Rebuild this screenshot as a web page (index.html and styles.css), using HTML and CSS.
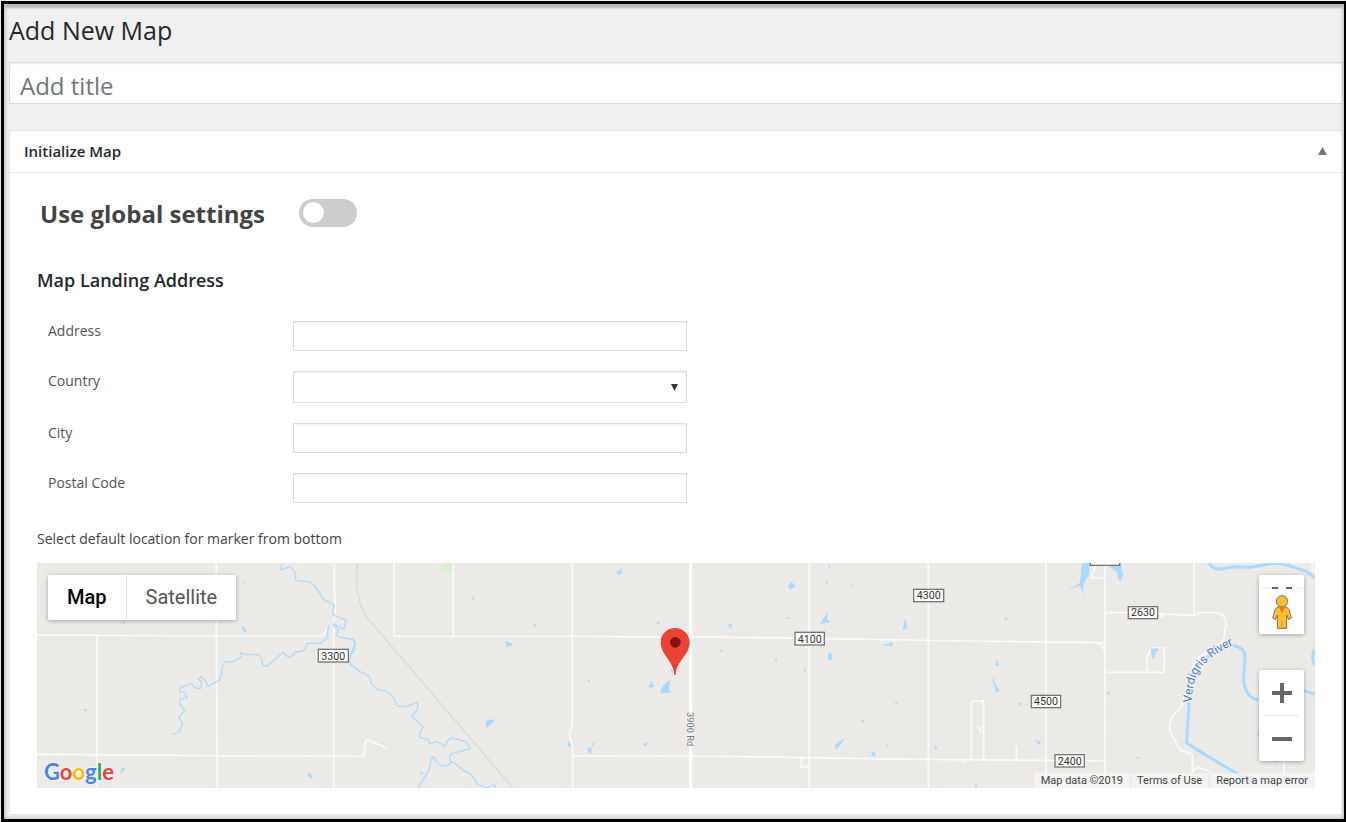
FILE: index.html
```html
<!DOCTYPE html>
<html lang="en">
<head>
<meta charset="utf-8">
<meta name="viewport" content="width=device-width, initial-scale=1">
<title>Add New Map</title>
<link rel="stylesheet" href="styles.css">
</head>
<body>
<main class="frame">
  <h1 class="page-title">Add New Map</h1>
  <input class="title-input" type="text" placeholder="Add title" aria-label="Add title">

  <section class="card">
    <header class="card-header">
      <h2 class="card-title">Initialize Map</h2>
      <button class="card-toggle" type="button" aria-label="Toggle panel">
        <svg width="9" height="8" viewBox="0 0 9 8"><path d="M4.500 0 9 8H0z" fill="#72777c"/></svg>
      </button>
    </header>

    <div class="card-body">
      <div class="global-row">
        <label class="global-label" for="global">Use global settings</label>
        <input class="switch" id="global" type="checkbox">
      </div>

      <h3 class="section-title">Map Landing Address</h3>
      <div class="fields">
        <label for="address">Address</label>
        <input class="field" id="address" type="text">
        <label for="country">Country</label>
        <div class="select-wrap">
          <select class="field field-select" id="country"><option></option></select>
          <svg class="select-arrow" width="7" height="7" viewBox="0 0 7 7"><path d="M0 0h7L3.500 7z" fill="#32373c"/></svg>
        </div>
        <label for="city">City</label>
        <input class="field" id="city" type="text">
        <label for="postal">Postal Code</label>
        <input class="field" id="postal" type="text">
      </div>

      <p class="hint">Select default location for marker from bottom</p>

      <div class="map">
        <svg class="map-canvas" viewBox="0 0 3834 675" preserveAspectRatio="xMidYMid slice" role="img" aria-label="Map">
          <rect width="3834" height="675" fill="#ebeae7"/>
          <!-- park and railway -->
          <path d="M1214 0h33v20h-34z" fill="#d5f0cb"/>
          <path d="M960 0V75Q965 120 985 158L1428 675" fill="none" stroke="#d8d9dc" stroke-width="4"/>

          <!-- local roads -->
          <g class="road">
            <path d="M0 216 540 219H856L884 182 892 170 896 130 892 90V0M180 219V675M538 0V219L541 675M890 182V675M0 574 540 578 980 580 986 535Q990 527 1000 534L1050 555"/>
            <path d="M1071 0V220H1600L2130 223 2620 231 2769 234 3204 239M1249 0V220M1606 0V485L1597 515 1607 552V675M1606 578 2130 581 2620 589 2769 590 3204 594M2317 0V675M2674 0V675M2293 585V613L2317 610M3027 0V675M2780 594V600"/>
            <path d="M3204 0V675M3204 149H3290M3362 152 3471 158 3490 149H3545Q3568 160 3567 185L3560 230Q3550 250 3510 268 3475 285 3462 325L3434 430 3405 462Q3388 500 3412 530L3430 562 3466 573V640L3462 675M3471 0V158M3330 328V280L3345 255H3382V328H3204M3204 45H3166Q3162 30 3178 8M3174 239Q3200 242 3204 270M2803 590V420L2807 414H2840V590M2838 494a7 7 0 1 0 0 12M2938 550V592M3465 628Q3480 605 3510 622L3545 642M3740 590V675M3826 0V20L3834 26"/>
          </g>
          <path d="M1961 0V675" fill="none" stroke="#fff" stroke-width="9"/>
          <circle cx="3376" cy="159" r="5" fill="#fff"/>

          <!-- creeks -->
          <g class="creek" transform="translate(-21 -21)">
            <path d="M756 22 752 42 780 32 797 52V73L836 77Q850 84 858 95L880 130 912 147 908 175 948 193 942 220 907 203 926 223 918 234 925 243 967 250Q975 252 973 262L975 280Q950 310 962 324L990 347"/>
            <path d="M900 205 893 223V243L872 262H833L820 285 797 288 784 303 773 302 760 289 710 331Q695 330 695 310L688 295 648 296 633 290V304L603 318 585 317Q575 330 576 350L568 373 533 392 528 376 514 362 505 370 514 376V396L498 397 484 382 452 394 449 407 462 408 472 424 451 429 449 445 464 463 446 485 458 503 446 528 427 537"/>
          </g>
          <g class="creek" transform="translate(939 -21)">
            <path d="M0 250Q18 248 14 266L0 300M0 324 25 344 55 360Q65 368 62 382L90 404H108L132 425Q136 448 145 451H172L203 438V458L186 482 219 514Q208 530 209 544L234 550 239 563 262 557 285 570Q295 545 310 547L350 558 361 578 305 593Q295 600 302 618L312 620 340 643 364 656 384 686 410 695 433 685 437 697M203 697 235 646 247 603Q256 600 256 613 265 625 276 629H292L306 618"/>
          </g>
          <g class="river" transform="translate(3309 -21)">
            <path d="M205 20Q220 42 245 39L280 32 330 34Q365 28 390 24 420 18 455 32L500 47 526 66M154 350Q185 305 230 290 265 270 275 268 315 275 315 300L311 370Q315 425 355 432M147 440 140 560Q200 600 290 652L340 680M524 280Q512 305 524 328M490 404 526 414M357 523V540M400 613H416"/>
          </g>

          <!-- ponds -->
          <g class="pond">
            <path transform="translate(-21 -21)" d="M639 75h5l-3 12zM633 207l14 12 3 12-8-2zM273 198l10-2 1 9zM248 190h6v4zM161 465l5-8 6 9zM270 655l5-20 12 1zM831 655l10-4 6 11-4 5z"/>
            <path transform="translate(939 -21)" d="M795 46h11l8-9 2 15-7 6zM366 130l3-10 5 11zM551 200l6 5v8h-5zM466 256l20 6 3 6-20 5zM405 498l18-9 11 5-23 22zM918 206l6-12 6 10zM712 378l4-9 5 9zM895 393l8-19 11 18-12 3zM930 412q5-28 31-41l-4 27 6 12zM962 345l6-8 2 15zM652 560l5-4 6 13-10 1zM711 580l4-5 9-1 1 18-8-2zM725 565l6-7v14zM878 564l12-5-1 12zM207 652l12-5-3 10z"/>
            <path transform="translate(1809 -21)" d="M443 92l12-15 11 13-14 12zM565 27h8l-5 10zM557 75l9 2-6 8zM627 85l13 2v5zM264 205h12l-4 14zM443 183l11 3-10 3zM540 204l23-35-2 20 11 9zM788 220l8-34 5 32zM237 285l11-6-1 9zM402 310l9-6-1 10zM565 289l12 3-1 21-12-1zM490 340h9l-5 9zM724 267l34-8v12zM760 439l15-1-3 6zM662 491l14-1-7 10zM584 568l31-23-25 36zM695 584l13 7-4 10-9-2zM738 570l8-9-3 13zM884 567l10 7-9 5zM95 345l25-15-12 23-14-4z"/>
            <path transform="translate(2769 -21)" d="M366 20h24l-3 37-14 22-4 12 3 25-9-18-3-9-35 13 35-22zM448 32l34-13 5 28 4 2-7 24-8-2-5-23zM135 186l9-1-8 12zM105 330l7-20 5 18zM102 353l1 28 16 22-10 9-11-36zM174 442l12-1-5 10zM227 553l17 5-9 8zM441 408l12 3-11 6zM572 278l23-2-17 35zM526 601l17 4-10 3zM46 682h4v14h-5z"/>
          </g>

          <!-- labels -->
          <g class="shield">
            <rect x="844" y="259" width="90" height="38"/><text x="889" y="290">3300</text>
            <rect x="2274" y="208" width="88" height="38"/><text x="2318" y="239">4100</text>
            <rect x="2630" y="79" width="90" height="37"/><text x="2675" y="109">4300</text>
            <rect x="2983" y="397" width="88" height="37"/><text x="3027" y="427">4500</text>
            <rect x="3054" y="575" width="88" height="37"/><text x="3098" y="605">2400</text>
            <rect x="3274" y="131" width="88" height="36"/><text x="3318" y="160">2630</text>
            <rect x="3160" y="-30" width="88" height="37"/>
          </g>
          <text class="road-name" transform="translate(1950 447) rotate(90)">3900 Rd</text>
          <path id="river-path" d="M3464 419C3468 330 3490 290 3600 240" fill="none"/>
          <text class="river-name"><textPath href="#river-path">Verdigris River</textPath></text>

          <!-- marker -->
          <path d="M1914 195c-25 0-43 19-43 43 0 40 38 54 41 98h4c3-44 42-58 42-98 0-24-19-43-44-43z" fill="#ea4335" stroke="#fff" stroke-width="4" paint-order="stroke"/>
          <circle cx="1915" cy="238" r="16" fill="#811411"/>
        </svg>

        <div class="map-types">
          <button class="type-btn type-active" type="button">Map</button>
          <button class="type-btn" type="button">Satellite</button>
        </div>

        <div class="side-top">
          <button class="full-btn" type="button" aria-label="Toggle fullscreen">
            <svg width="20" height="2" viewBox="0 0 20 2"><path d="M0 0h6v2H0zM14 0h6v2h-6z" fill="#666"/></svg>
          </button>
          <button class="pegman" type="button" aria-label="Street View">
            <svg width="20" height="34" viewBox="0 0 60 102">
              <g fill="#fbbf2d" stroke="#77746d" stroke-width="3" stroke-linejoin="round">
                <path d="M16 36h28l7 8 7 25-8 5-6-14v40H16V60l-6 14-8-5 7-25z"/>
                <circle cx="30" cy="19" r="17"/>
              </g>
              <path d="M30 76v22" stroke="#b98f35" stroke-width="2"/>
              <path d="M20 36h21L30 54z" fill="#e07b28"/>
            </svg>
          </button>
        </div>

        <div class="zoom">
          <button class="zoom-btn" type="button" aria-label="Zoom in">
            <svg width="20" height="20" viewBox="0 0 20 20"><path d="M8 0h4v8h8v4h-8v8H8v-8H0V8h8z" fill="#666"/></svg>
          </button>
          <button class="zoom-btn" type="button" aria-label="Zoom out">
            <svg width="20" height="20" viewBox="0 0 20 20"><path d="M0 8h20v4H0z" fill="#666"/></svg>
          </button>
        </div>

        <a class="google" href="#" aria-label="Google"><span class="g-blue">G</span><span class="g-red">o</span><span class="g-yellow">o</span><span class="g-blue">g</span><span class="g-green">l</span><span class="g-red">e</span></a>

        <div class="credits">
          <span>Map data ©2019</span>
          <a href="#">Terms of Use</a>
          <a href="#">Report a map error</a>
        </div>
      </div>
    </div>
  </section>
</main>
</body>
</html>
```
FILE: styles.css
```css
* { box-sizing: border-box; }

body {
  margin: 0;
  padding: 1px 0 0 1px;
  min-height: 100vh;
  display: flex;
  background: #e4efe6;
  color: #444;
  font-family: "Open Sans", "Noto Sans", sans-serif;
  font-size: 14px;
}

h1, h2, h3, p { margin: 0; }
button { font: inherit; border: 0; padding: 0; background: none; cursor: pointer; }
svg { display: block; }

.frame {
  position: relative;
  flex: 1;
  min-width: 0;
  display: flex;
  flex-direction: column;
  padding: 9px 1px 4px 5px;
  border: 3px solid #000;
  border-right-width: 2px;
  background: #f0f0f0;
}
.frame::after {
  content: "";
  position: absolute;
  inset: 0;
  pointer-events: none;
  box-shadow: inset 0 4px 2px #bbb, inset 0 0 5px rgba(0, 0, 0, .3);
}

.page-title {
  color: #23282d;
  font-size: 25px;
  font-weight: 400;
  line-height: 34px;
}

.title-input {
  width: 100%;
  height: 42px;
  margin: 15px 0 26px;
  padding: 4px 10px 0;
  border: 1px solid #ddd;
  background: #fff;
  box-shadow: inset 0 1px 2px rgba(0, 0, 0, .07);
  color: #32373c;
  font-family: inherit;
  font-size: 24px;
}
.title-input::placeholder { color: #72777c; }

.card {
  flex: 1;
  border: 1px solid #e5e5e5;
  background: #fff;
}
.card-header {
  display: flex;
  align-items: center;
  justify-content: space-between;
  height: 42px;
  padding: 0 15px 2px 14px;
  border-bottom: 1px solid #eee;
}
.card-title { color: #23282d; font-size: 15px; font-weight: 600; }
.card-body { padding: 19px 27px 26px; }

.global-row {
  display: flex;
  align-items: center;
  gap: 34px;
  padding: 0 3px;
  height: 42px;
}
.global-label { font-size: 24px; font-weight: 700; }
.switch {
  appearance: none;
  width: 58px;
  height: 28px;
  margin: 0;
  padding: 3px 4px;
  border-radius: 14px;
  background: #ccc;
}
.switch::before {
  content: "";
  display: block;
  width: 21px;
  height: 21px;
  border-radius: 50%;
  background: #fff;
}
.switch:checked { background: #2196f3; }
.switch:checked::before { margin-left: auto; }

.section-title {
  margin-top: 33px;
  color: #23282d;
  font-size: 18px;
  font-weight: 600;
  line-height: 26px;
}

.fields {
  display: grid;
  grid-template-columns: 245px minmax(0, 394px);
  row-gap: 20px;
  margin-top: 28px;
  padding-left: 11px;
}
.fields label { line-height: 20px; color: #555; }
.field {
  display: block;
  width: 100%;
  height: 30px;
  border: 1px solid #ddd;
  background: #fff;
  box-shadow: inset 0 1px 2px rgba(0, 0, 0, .07);
  font-family: inherit;
  font-size: 14px;
}
.field-select { height: 32px; appearance: none; border-radius: 0; }
.select-wrap { position: relative; }
.select-arrow { position: absolute; right: 9px; top: 13px; pointer-events: none; }

.hint { margin: 25px 0 14px; line-height: 21px; }

.map {
  position: relative;
  height: 225px;
  overflow: hidden;
  background: #ebeae7;
  font-family: Roboto, sans-serif;
}
.map-canvas { width: 100%; height: 100%; }
.road { fill: none; stroke: #fafaf9; stroke-width: 5; }
.creek { fill: none; stroke: #b0dbfb; stroke-width: 4; stroke-linejoin: round; }
.river { fill: none; stroke: #aadaff; stroke-width: 9; stroke-linejoin: round; }
.pond { fill: #aadaff; }
.shield rect { fill: #fff; stroke: #777; stroke-width: 4; }
.shield text { fill: #333; font-size: 32px; text-anchor: middle; }
.road-name, .river-name { stroke: #f2f2f0; stroke-width: 6; paint-order: stroke; }
.road-name { fill: #70777b; font-size: 28px; }
.river-name { fill: #4b80c5; font-size: 36px; }

.map-types {
  position: absolute;
  top: 12px;
  left: 11px;
  display: flex;
  height: 45px;
  border-radius: 2px;
  background: #fff;
  box-shadow: 0 1px 4px rgba(0, 0, 0, .3);
}
.type-btn { padding: 0 19px 2px; color: #565656; font-size: 20px; }
.type-active { color: #000; font-weight: 500; border-right: 1px solid #e6e6e6; }

.side-top {
  position: absolute;
  top: 12px;
  right: 11px;
  display: flex;
  flex-direction: column;
  width: 45px;
  background: #fff;
  border-radius: 2px;
  box-shadow: 0 1px 4px rgba(0, 0, 0, .3);
}
.full-btn { display: flex; justify-content: center; align-items: flex-end; height: 14px; }
.pegman {
  display: flex;
  justify-content: center;
  align-items: center;
  height: 45px;
  background: #fff;
  border-radius: 2px;
  box-shadow: 0 -1px 2px rgba(0, 0, 0, .08);
}

.zoom {
  position: absolute;
  right: 11px;
  bottom: 27px;
  width: 45px;
  padding: 0 5px;
  background: #fff;
  border-radius: 2px;
  box-shadow: 0 1px 4px rgba(0, 0, 0, .3);
}
.zoom-btn { display: flex; justify-content: center; align-items: center; width: 100%; height: 45px; }
.zoom-btn + .zoom-btn { height: 46px; border-top: 1px solid #e6e6e6; }

.google {
  position: absolute;
  left: 7px;
  bottom: 3px;
  font-family: Lato, sans-serif;
  font-size: 22px;
  font-weight: 700;
  line-height: 26px;
  text-decoration: none;
  text-shadow: 0 0 2px #fff, 0 0 2px #fff;
}
.g-blue { color: #4285f4; }
.g-red { color: #ea4335; }
.g-yellow { color: #fbbc05; }
.g-green { color: #34a853; }

.credits {
  position: absolute;
  right: 0;
  bottom: 0;
  display: flex;
  height: 15px;
  background: rgba(245, 245, 245, .75);
  color: #444;
  font-size: 11px;
  line-height: 16px;
}
.credits > * { padding: 0 7px; color: inherit; text-decoration: none; }
.credits > * + * { padding-left: 6px; border-left: 1px solid #e6e6e4; }
```
